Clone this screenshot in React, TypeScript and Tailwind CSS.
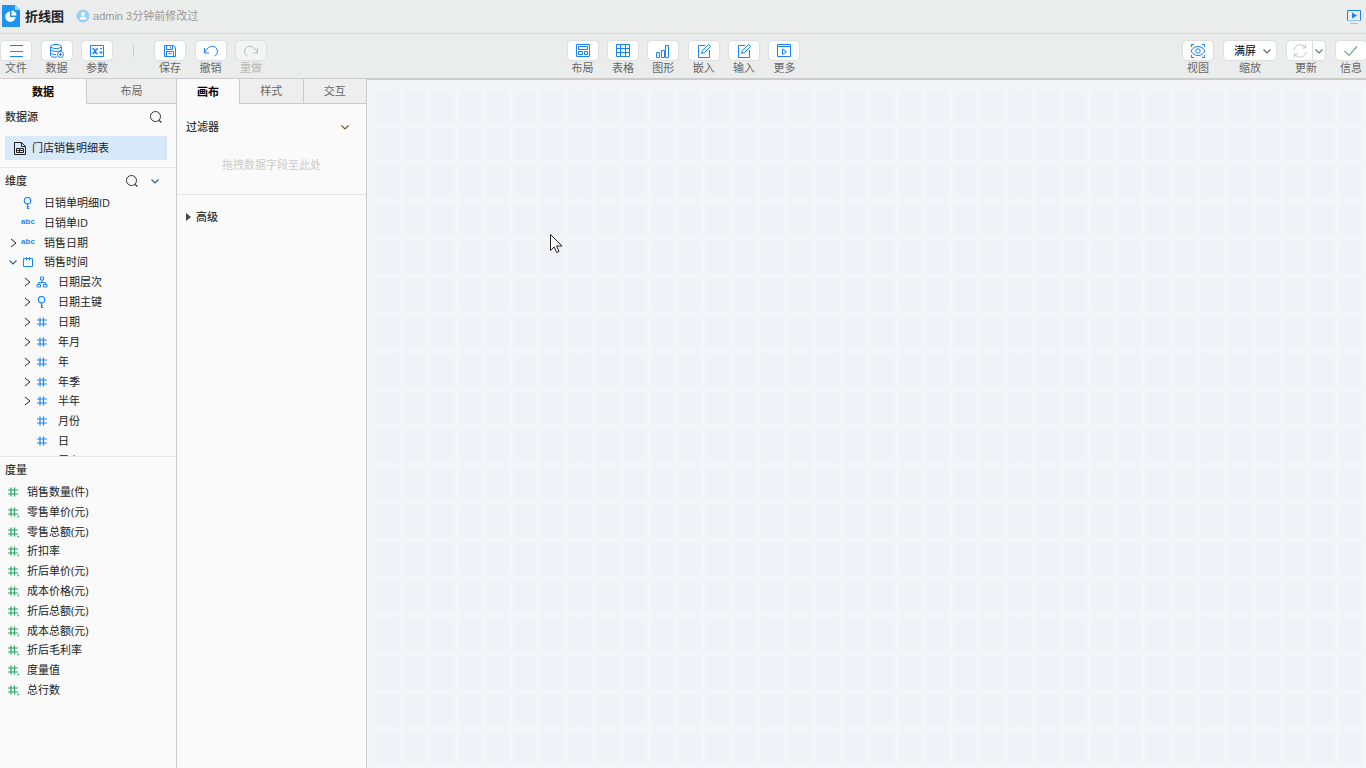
import type { ReactNode } from 'react';

type IconName = 'key' | 'abc' | 'calendar' | 'hierarchy' | 'hash';

interface Field {
  label: string;
  icon: IconName;
  level: 0 | 1;
  state?: 'open' | 'closed';
}

const DIMENSIONS: Field[] = [
  { label: '日销单明细ID', icon: 'key', level: 0 },
  { label: '日销单ID', icon: 'abc', level: 0 },
  { label: '销售日期', icon: 'abc', level: 0, state: 'closed' },
  { label: '销售时间', icon: 'calendar', level: 0, state: 'open' },
  { label: '日期层次', icon: 'hierarchy', level: 1, state: 'closed' },
  { label: '日期主键', icon: 'key', level: 1, state: 'closed' },
  { label: '日期', icon: 'hash', level: 1, state: 'closed' },
  { label: '年月', icon: 'hash', level: 1, state: 'closed' },
  { label: '年', icon: 'hash', level: 1, state: 'closed' },
  { label: '年季', icon: 'hash', level: 1, state: 'closed' },
  { label: '半年', icon: 'hash', level: 1, state: 'closed' },
  { label: '月份', icon: 'hash', level: 1 },
  { label: '日', icon: 'hash', level: 1 },
  { label: '周六', icon: 'hash', level: 1 },
];

const MEASURES = [
  { label: '销售数量(件)', decimal: false },
  { label: '零售单价(元)', decimal: true },
  { label: '零售总额(元)', decimal: true },
  { label: '折扣率', decimal: true },
  { label: '折后单价(元)', decimal: true },
  { label: '成本价格(元)', decimal: true },
  { label: '折后总额(元)', decimal: true },
  { label: '成本总额(元)', decimal: true },
  { label: '折后毛利率', decimal: true },
  { label: '度量值', decimal: true },
  { label: '总行数', decimal: true },
];

const CELLS = Array.from({ length: 36 * 18 }, (_, i) => i);

function Svg({ size = 16, className = '', children }: { size?: number; className?: string; children: ReactNode }) {
  return (
    <svg
      width={size}
      height={size}
      viewBox={`0 0 ${size} ${size}`}
      fill="none"
      stroke="currentColor"
      className={`shrink-0 ${className}`}
      aria-hidden="true"
    >
      {children}
    </svg>
  );
}

function Chevron({ open, className = 'text-[#333]' }: { open?: boolean; className?: string }) {
  return (
    <Svg size={10} className={className}>
      <path d={open ? 'M1.500 3.500L5 7l3.500-3.500' : 'M3 1l5 4-5 4'} strokeWidth={open ? 1.2 : 1} />
    </Svg>
  );
}

function SearchIcon() {
  return (
    <Svg size={14} className="text-[#333]">
      <circle cx="6.5" cy="6.5" r="5" />
      <path d="M10 10.5l2.5 2" strokeWidth="1.2" />
    </Svg>
  );
}

function HashIcon({ decimal }: { decimal?: boolean }) {
  return (
    <Svg size={12}>
      <path d="M1 4h10M1 8h10M4 1.500v9M7.500 1.500v9" strokeWidth="1.2" />
      {decimal && <path d="M10.500 10.500H12" strokeWidth="1.300" />}
    </Svg>
  );
}

function FieldIcon({ name }: { name: IconName }) {
  switch (name) {
    case 'key':
      return (
        <Svg size={12}>
          <circle cx="5.500" cy="3.700" r="3.200" strokeWidth="1.200" />
          <path d="M5.500 7v5M5.500 11.500h2M5.500 9.500h1.500" strokeWidth="1.200" />
        </Svg>
      );
    case 'abc':
      return <span className="w-3 flex justify-center font-['Liberation_Sans'] font-bold text-[8px] leading-3 pb-0.5">abc</span>;
    case 'calendar':
      return (
        <Svg size={12}>
          <path d="M4 2.500H1.500v8h9v-8H8M5 2.500h2M4.500 1v3.500M7.500 1v3.500" />
        </Svg>
      );
    case 'hierarchy':
      return (
        <Svg size={12}>
          <path d="M4.500 1h3v3h-3zM6 4v2.500M2.500 8.500v-2h7v2M1 8.500h3.500v2.500H1zM7.500 8.500H11v2.500H7.500z" />
        </Svg>
      );
    default:
      return <HashIcon />;
  }
}

function ToolButton({ label, disabled, children }: { label: string; disabled?: boolean; children: ReactNode }) {
  return (
    <button disabled={disabled} className="group w-[30px] flex flex-col items-center text-[#666] disabled:text-[#b5b9b9]">
      <span className="w-full h-[19px] flex items-center justify-center rounded-sm bg-white shadow-[0_0_1px_1px_#dcdede] text-[#1a82fa] group-disabled:bg-[#f3f4f4] group-disabled:text-[#b8bcbc]">
        {children}
      </span>
      <span className="h-4 leading-4 whitespace-nowrap">{label}</span>
    </button>
  );
}

function Tab({ label, active }: { label: string; active?: boolean }) {
  return (
    <button
      role="tab"
      aria-selected={!!active}
      className={active ? 'h-full font-bold text-black' : 'h-full bg-[#eee] border-l border-b border-[#ccc] text-[#666]'}
    >
      {label}
    </button>
  );
}

function Header() {
  return (
    <header className="h-[34px] shrink-0 flex items-center pl-0.5 pr-1 pb-px bg-[#ebedec] border-b border-[#d9dbda]">
      <svg width="18" height="22" viewBox="0 0 18 22" aria-hidden="true">
        <path d="M0 0h13l5 5v17H0z" fill="#1e93f2" />
        <path d="M13 0v5h5z" fill="#a6d6fb" />
        <path d="M8 6.500A5.200 5.200 0 1 0 13.600 12H8z" fill="#fff" />
        <path d="M9.500 5.500A5 5 0 0 1 14.500 10.500h-5z" fill="#fff" />
      </svg>
      <h1 className="ml-[5px] text-[13px] leading-5 font-bold text-[#222]">折线图</h1>
      <svg className="ml-3" width="14" height="14" viewBox="0 0 14 14" aria-hidden="true">
        <circle cx="7" cy="7" r="6.500" fill="#95d0f7" />
        <circle cx="7" cy="5" r="2" fill="#fff" />
        <path d="M3.500 10.500c0-4 7-4 7 0z" fill="#fff" />
      </svg>
      <span className="ml-[3px] text-[#999] font-['Liberation_Sans','Noto_Sans_CJK_SC',sans-serif]">admin 3分钟前修改过</span>
      <button aria-label="预览" className="ml-auto text-[#1a82fa]">
        <Svg size={16}>
          <path d="M1.500 2.500h13v10h-13z" />
          <path d="M1 12.500h14M4.500 15.500h7" stroke="#8cc3f5" />
          <path d="M6 4.500l5 3-5 3z" fill="currentColor" stroke="none" />
        </Svg>
      </button>
    </header>
  );
}

function Toolbar() {
  return (
    <div className="h-[45px] shrink-0 grid grid-cols-[1fr_auto_1fr] items-start pt-[7px] pl-px bg-[#ebedec] border-b border-[#ccc]">
      <div className="flex items-start">
        <div className="w-[111px] flex justify-between">
          <ToolButton label="文件">
            <Svg><path d="M2 2.500h13M2 8.500h13M2 13.500h13" /></Svg>
          </ToolButton>
          <ToolButton label="数据">
            <Svg>
              <ellipse cx="7" cy="3.500" rx="5.500" ry="2" />
              <path d="M1.500 3.500v3c0 2.500 11 2.500 11 0v-3M1.500 6.500v3c0 1.500 3 2 5.500 2M12.500 6.500V8M1.500 9.500v3c0 1.500 4 2 6.500 1.500" />
              <circle cx="11.500" cy="11.500" r="3" />
              <path d="M10 11.500h3M11.500 10v3" />
            </Svg>
          </ToolButton>
          <ToolButton label="参数">
            <Svg>
              <path d="M1.500 2.500h13v11h-13z" />
              <path d="M3.500 5.500c3-1 2 6 5 5M9 5.500c-2-.5-3 5-5.500 5" strokeWidth="1.500" />
              <path d="M11 5.500h2M10.500 9.500h3M12 8v3" />
            </Svg>
          </ToolButton>
        </div>
        <div className="ml-[21px] mt-1 mr-[21px] h-3 w-px bg-[#c3d0d3]" />
        <div className="w-[111px] flex justify-between">
          <ToolButton label="保存">
            <Svg>
              <path d="M2.500 2.500h9l2 2v9h-11zM4.500 2.500v4h6v-4M4.500 13.500v-5h7v5M8.500 3.500v2M6.500 10.500h3" />
            </Svg>
          </ToolButton>
          <ToolButton label="撤销">
            <Svg><path d="M1.500 5v5H6M1.500 10C5 1 14 2 14.500 8c0 2-1 4-3 5" /></Svg>
          </ToolButton>
          <ToolButton label="重做" disabled>
            <Svg><path d="M14.500 5v5H10M14.500 10C11 1 2 2 1.500 8c0 2 1 4 3 5" /></Svg>
          </ToolButton>
        </div>
      </div>

      <div className="w-[232px] flex justify-between">
        <ToolButton label="布局">
          <Svg>
            <path d="M1.500 1.500h13v12h-13zM3.500 3.500h9v3h-9zM3.500 8.500h4v3h-4zM9.500 8.500h3v3h-3z" />
          </Svg>
        </ToolButton>
        <ToolButton label="表格">
          <Svg><path d="M1.500 1.500h13v12h-13zM1.500 5.500h13M1.500 9.500h13M5.500 1.500v12M10.500 1.500v12" /></Svg>
        </ToolButton>
        <ToolButton label="图形">
          <Svg><path d="M1.500 9.500h3v5h-3zM6.500 7.500h3v7h-3zM10.500 2.500h3v12h-3z" /></Svg>
        </ToolButton>
        <ToolButton label="嵌入">
          <Svg>
            <path d="M9 2.500H2.500v12h11V7" />
            <path d="M5.500 10.500l1-3 6-6 2 2-6 6z" />
          </Svg>
        </ToolButton>
        <ToolButton label="输入">
          <Svg>
            <path d="M9 2.500H2.500v12h11V7" />
            <path d="M5.500 10.500l1-3 6-6 2 2-6 6z" />
          </Svg>
        </ToolButton>
        <ToolButton label="更多">
          <Svg>
            <path d="M1.500 1.500h13v12h-13zM1.500 3.500h13M6.500 6v5.500l4-2.700z" />
          </Svg>
        </ToolButton>
      </div>

      <div className="flex justify-end gap-[11px]">
        <ToolButton label="视图">
          <Svg>
            <path d="M1.500 4V1.500H4M12 1.500h2.500V4M14.500 12v2.500H12M4 14.500H1.500V12" />
            <path d="M1 8c3-6 11-6 14 0-3 6-11 6-14 0z" />
            <circle cx="8" cy="8" r="2.200" />
          </Svg>
        </ToolButton>
        <div className="flex flex-col items-center">
          <div className="relative h-[19px] w-[52px] rounded-sm bg-white shadow-[0_0_1px_1px_#dcdede]">
            <select id="zoom" className="appearance-none h-[19px] w-full pl-2.5 text-black leading-5 bg-transparent outline-none">
              <option>满屏</option>
            </select>
            <span className="absolute right-1 top-[5px] pointer-events-none">
              <Chevron open className="text-[#667]" />
            </span>
          </div>
          <label htmlFor="zoom" className="h-4 leading-4 text-[#666]">缩放</label>
        </div>
        <div className="flex flex-col items-center">
          <div className="h-[19px] w-[38px] flex rounded-sm bg-white shadow-[0_0_1px_1px_#dcdede]">
            <button aria-label="更新" disabled className="flex-1 flex items-center justify-center text-[#c4c6c8]">
              <Svg>
                <path d="M2 7c1-6 9-7 11.500-2M14 9c-1 6-9 7-11.500 2M13.500 1.500V5H10M2.500 14.500V11H6" />
              </Svg>
            </button>
            <button aria-label="更新选项" className="w-[13px] flex items-center justify-center border-l border-[#dcdede]">
              <Chevron open className="text-[#678]" />
            </button>
          </div>
          <span className="h-4 leading-4 text-[#666]">更新</span>
        </div>
        <ToolButton label="信息">
          <Svg className="text-[#6fae7f]"><path d="M1.500 8L6 12.500l8-9" strokeWidth="1.200" /></Svg>
        </ToolButton>
      </div>
    </div>
  );
}

function DimensionRow({ field }: { field: Field }) {
  return (
    <li className={`flex items-center min-h-0 ${field.level === 1 ? 'pl-[22px]' : 'pl-2'}`}>
      <span className="w-2.5 flex justify-center">
        {field.state && (
          <button aria-label={`${field.label} 展开`}>
            <Chevron open={field.state === 'open'} className={field.state === 'open' ? 'text-[#2f6490]' : 'text-[#222]'} />
          </button>
        )}
      </span>
      <span className="ml-1 w-3 flex justify-center text-[#1a88f5]">
        <FieldIcon name={field.icon} />
      </span>
      <span className="ml-2.5 whitespace-nowrap">{field.label}</span>
    </li>
  );
}

function DataPanel() {
  return (
    <aside className="w-[177px] shrink-0 flex flex-col bg-[#fafafa] border-r border-[#ccc]">
      <div role="tablist" className="h-[25px] shrink-0 grid grid-cols-[86px_1fr]">
        <Tab label="数据" active />
        <Tab label="布局" />
      </div>

      <section className="h-16 shrink-0 border-b border-[#e3e3e3]">
        <div className="h-[26px] flex items-center justify-between pl-[5px] pr-[13px]">
          <h2 className="font-medium text-[#333]">数据源</h2>
          <button aria-label="搜索数据源"><SearchIcon /></button>
        </div>
        <button className="mt-1.5 ml-[5px] w-[162px] h-6 flex items-center pl-2 bg-[#d8e9fc] text-[#222]">
          <Svg size={14}>
            <path d="M1.500 1.500h7l4 4v8h-11zM8.500 1.500v4h4" />
            <path d="M3.500 7.500h7v4h-7zM3.500 9.500h7M6.500 7.500v4" />
          </Svg>
          <span className="ml-[5px]">门店销售明细表</span>
        </button>
      </section>

      <section className="h-[289px] shrink-0 flex flex-col border-b border-[#e3e3e3]">
        <div className="h-[25px] shrink-0 flex items-center pl-[5px] pr-4">
          <h2 className="font-medium text-[#333]">维度</h2>
          <button aria-label="搜索维度" className="ml-auto"><SearchIcon /></button>
          <button aria-label="收起维度" className="ml-[11px]"><Chevron open className="text-[#2f6490]" /></button>
        </div>
        <div className="flex-1 min-h-0 overflow-hidden">
          <ul className="h-[278px] grid auto-rows-fr">
            {DIMENSIONS.map(f => <DimensionRow key={f.label} field={f} />)}
          </ul>
        </div>
      </section>

      <section>
        <h2 className="h-[25px] leading-[25px] pl-[5px] font-medium text-[#333]">度量</h2>
        <ul className="h-[218px] grid auto-rows-fr">
          {MEASURES.map(m => (
            <li key={m.label} className="flex items-center min-h-0 pl-[7px]">
              <span className="text-[#27a567]"><HashIcon decimal={m.decimal} /></span>
              <span className="ml-2">{m.label}</span>
            </li>
          ))}
        </ul>
      </section>
    </aside>
  );
}

function SettingsPanel() {
  return (
    <aside className="w-[190px] shrink-0 flex flex-col bg-[#fafafa] border-r border-[#ccc]">
      <div role="tablist" className="h-[25px] shrink-0 grid grid-cols-[62px_1fr_1fr]">
        <Tab label="画布" active />
        <Tab label="样式" />
        <Tab label="交互" />
      </div>
      <section className="h-[91px] shrink-0 border-b border-[#e3e3e3]">
        <div className="h-[45px] flex items-center justify-between pl-[9px] pr-4">
          <h2 className="font-medium text-[#333]">过滤器</h2>
          <button aria-label="收起过滤器"><Chevron open className="text-[#7a5a30]" /></button>
        </div>
        <p className="leading-8 text-center text-[#ccc]">拖拽数据字段至此处</p>
      </section>
      <button className="h-11 flex items-center pl-[9px] font-medium text-[#333]">
        <Svg size={8}><path d="M0 0v8l5-4z" fill="#444" stroke="none" /></Svg>
        <span className="ml-0.5">高级</span>
      </button>
    </aside>
  );
}

function Canvas() {
  return (
    <main className="relative flex-1 min-w-0 border-t border-[#ccc] bg-[#f3f5f9] flex">
      <div className="flex-1 mt-2.5 ml-[9px] mr-[5px] mb-1 grid grid-cols-36 grid-rows-18 gap-[5px]">
        {CELLS.map(i => <div key={i} className="bg-[#f0f2f7]" />)}
      </div>
      <svg className="absolute left-[183px] top-[154px]" width="13" height="20" viewBox="0 0 13 20" aria-hidden="true">
        <path d="M.500.500v16l3.700-3.500 2.500 5.500 2.300-1-2.400-5.500H12z" fill="#fff" stroke="#222" />
      </svg>
    </main>
  );
}

export default function App() {
  return (
    <div className="h-screen flex flex-col overflow-hidden bg-[#fafafa] text-[11px] leading-4 text-[#222] font-['Open_Sans','Noto_Sans_CJK_SC',sans-serif]">
      <Header />
      <Toolbar />
      <div className="flex-1 min-h-0 flex">
        <DataPanel />
        <SettingsPanel />
        <Canvas />
      </div>
    </div>
  );
}
